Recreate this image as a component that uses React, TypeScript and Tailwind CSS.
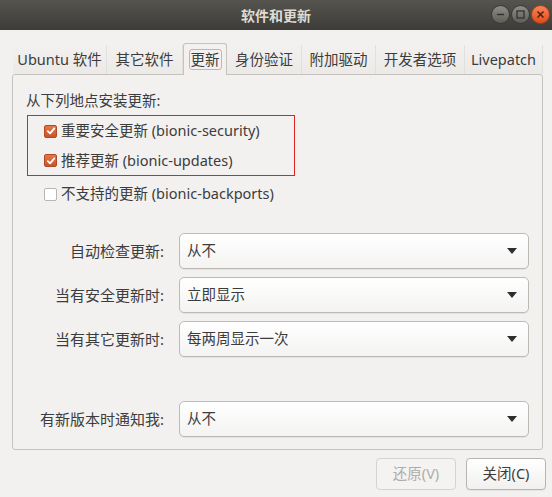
import React from "react";

const FONT = '"Noto Sans", "Noto Sans CJK SC", sans-serif';

function Check({ checked }: { checked: boolean }) {
  if (checked) {
    return (
      <span className="inline-flex items-center justify-center w-[13px] h-[13px] rounded-[2px] bg-gradient-to-b from-[#e2784b] to-[#c8552a] border border-[#b14a22]">
        <svg width="10" height="10" viewBox="0 0 10 10">
          <path d="M1.8 5.2 L4.1 7.4 L8.3 2.4" fill="none" stroke="#ffffff" strokeWidth="1.8" strokeLinecap="round" strokeLinejoin="round" />
        </svg>
      </span>
    );
  }
  return <span className="inline-block w-[13px] h-[13px] rounded-[2px] bg-white border border-[#b9b6b1]" />;
}

function Combo({ value }: { value: string }) {
  return (
    <div className="w-[350px] h-[36px] rounded-[5px] border border-[#bdbab5] bg-gradient-to-b from-[#ffffff] to-[#f4f3f2] flex items-center justify-between pl-[7px] pr-[11px] shadow-[0_1px_0_rgba(0,0,0,0.06)]">
      <span className="text-[14.5px] text-[#3c3c3c]">{value}</span>
      <svg width="10" height="6" viewBox="0 0 10 6">
        <path d="M0 0 L10 0 L5 6 Z" fill="#2e2e2e" />
      </svg>
    </div>
  );
}

function Row({ label, value }: { label: string; value: string }) {
  return (
    <div className="flex items-center">
      <div className="w-[166px] text-right text-[15px] text-[#3c3c3c] pr-[15px]">{label}</div>
      <Combo value={value} />
    </div>
  );
}

const tabs: { label: string; w: number; active?: boolean }[] = [
  { label: "Ubuntu 软件", w: 94 },
  { label: "其它软件", w: 76 },
  { label: "更新", w: 44, active: true },
  { label: "身份验证", w: 75 },
  { label: "附加驱动", w: 74 },
  { label: "开发者选项", w: 89 },
  { label: "Livepatch", w: 78 },
];

function WinBtn({ kind }: { kind: "min" | "max" | "close" }) {
  const isClose = kind === "close";
  return (
    <div
      className={
        "w-[19px] h-[19px] rounded-full flex items-center justify-center border " +
        (isClose
          ? "bg-gradient-to-b from-[#f68457] to-[#df4a17] border-[#a8401c]"
          : "bg-gradient-to-b from-[#8f8d88] to-[#5f5d58] border-[#3a3935]")
      }
    >
      <svg width="9" height="9" viewBox="0 0 9 9">
        {kind === "min" && <path d="M1 4.5 H8" stroke="#2f2e2b" strokeWidth="1.4" />}
        {kind === "max" && <rect x="1" y="1" width="7" height="7" fill="none" stroke="#2f2e2b" strokeWidth="1.2" />}
        {kind === "close" && <path d="M1.5 1.5 L7.5 7.5 M7.5 1.5 L1.5 7.5" stroke="#4a1a08" strokeWidth="1.4" />}
      </svg>
    </div>
  );
}

export default function App() {
  return (
    <div className="w-[552px] h-[497px] bg-[#f2f1f0] flex flex-col overflow-hidden" style={{ fontFamily: FONT }}>
      {/* Title bar */}
      <div className="h-[30px] shrink-0 bg-gradient-to-b from-[#56544f] to-[#3d3c38] relative flex items-center justify-center">
        <span className="text-[14px] font-bold text-[#dfdbd2]">软件和更新</span>
        <div className="absolute right-[2px] top-[5px] flex gap-[1px]">
          <WinBtn kind="min" />
          <WinBtn kind="max" />
          <WinBtn kind="close" />
        </div>
      </div>

      {/* Tabs */}
      <div className="mt-[13px] ml-[13px] flex h-[31px]">
        {tabs.map((t) =>
          t.active ? (
            <div
              key={t.label}
              style={{ width: t.w }}
              className="relative z-10 h-[32px] border border-b-0 border-[#c6c3bf] rounded-t-[3px] bg-[#f2f1f0] flex items-center justify-center"
            >
              <span className="px-[1px] h-[21px] leading-[19px] rounded-[3px] border border-[#eba88a] text-[14.5px] text-[#3c3c3c]">
                {t.label}
              </span>
            </div>
          ) : (
            <div
              key={t.label}
              style={{ width: t.w }}
              className="h-[29px] mt-[2px] border-r border-[#e2e0dc] flex items-center justify-center text-[14.5px] text-[#3c3c3c] bg-gradient-to-b from-[#f2f1f0] to-[#eceae7]"
            >
              {t.label}
            </div>
          )
        )}
      </div>

      {/* Panel */}
      <div className="ml-[12px] w-[531px] h-[376px] border border-[#c6c3bf] rounded-[3px] bg-[#f2f1f0] flex flex-col">
        <div className="mt-[15px] ml-[13px] h-[20px] leading-[20px] text-[14.5px] text-[#3c3c3c]">从下列地点安装更新:</div>
        <div className="mt-[5px] ml-[14px] w-[268px] h-[61px] border border-[#e0241b] flex flex-col">
          <div className="h-[29px] mt-[1px] flex items-center pl-[16px] gap-[4px] text-[14.5px] text-[#3c3c3c]">
            <Check checked />
            <span>重要安全更新 (bionic-security)</span>
          </div>
          <div className="h-[30px] mt-[1px] flex items-center pl-[16px] gap-[4px] text-[14.5px] text-[#3c3c3c]">
            <Check checked />
            <span>推荐更新 (bionic-updates)</span>
          </div>
        </div>
        <div className="mt-[3px] h-[30px] flex items-center pl-[31px] gap-[4px] text-[14.5px] text-[#3c3c3c]">
          <Check checked={false} />
          <span>不支持的更新 (bionic-backports)</span>
        </div>
        <div className="mt-[24px] flex flex-col gap-[8px]">
          <Row label="自动检查更新:" value="从不" />
          <Row label="当有安全更新时:" value="立即显示" />
          <Row label="当有其它更新时:" value="每两周显示一次" />
        </div>
        <div className="mt-[44px]">
          <Row label="有新版本时通知我:" value="从不" />
        </div>
      </div>

      {/* Buttons */}
      <div className="mt-[8px] flex justify-end gap-[10px] pr-[6px]">
        <div className="w-[80px] h-[32px] rounded-[4px] border border-[#d6d3cf] bg-[#f4f3f2] flex items-center justify-center text-[14.5px] text-[#aeaca8]">
          还原(V)
        </div>
        <div className="w-[80px] h-[32px] rounded-[4px] border border-[#b8b5b0] bg-gradient-to-b from-[#ffffff] to-[#f1f0ef] flex items-center justify-center text-[14.5px] text-[#3c3c3c] shadow-[0_1px_0_rgba(0,0,0,0.05)]">
          关闭(C)
        </div>
      </div>
    </div>
  );
}
